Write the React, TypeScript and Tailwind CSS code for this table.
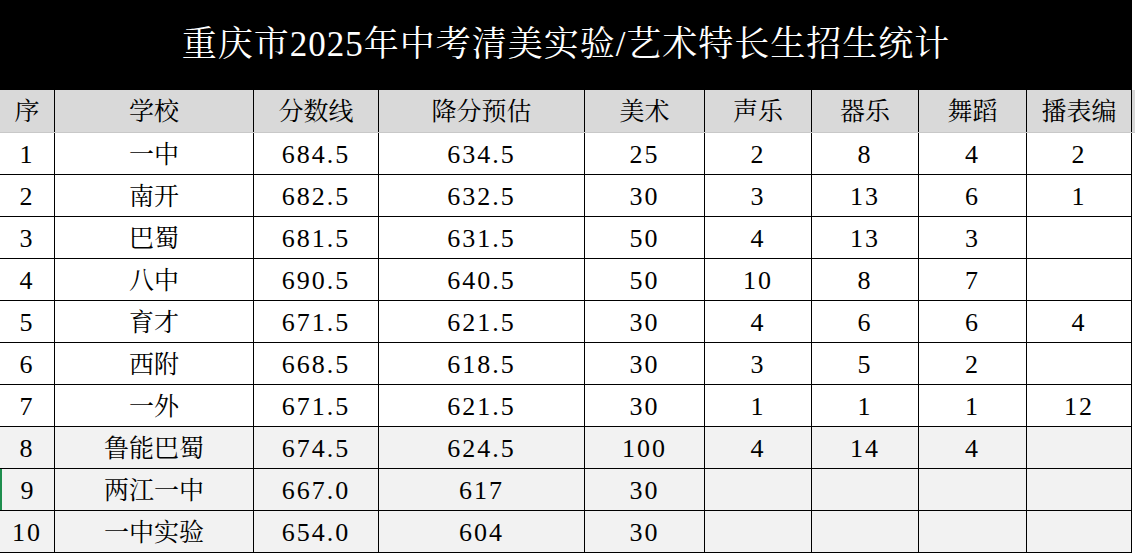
import React from "react";

const font = {
  fontFamily:
    '"Liberation Serif", "Noto Serif CJK SC", "Noto Sans CJK SC", serif',
};

const headers = ["序", "学校", "分数线", "降分预估", "美术", "声乐", "器乐", "舞蹈", "播表编"];

const rows: string[][] = [
  ["1", "一中", "684.5", "634.5", "25", "2", "8", "4", "2"],
  ["2", "南开", "682.5", "632.5", "30", "3", "13", "6", "1"],
  ["3", "巴蜀", "681.5", "631.5", "50", "4", "13", "3", ""],
  ["4", "八中", "690.5", "640.5", "50", "10", "8", "7", ""],
  ["5", "育才", "671.5", "621.5", "30", "4", "6", "6", "4"],
  ["6", "西附", "668.5", "618.5", "30", "3", "5", "2", ""],
  ["7", "一外", "671.5", "621.5", "30", "1", "1", "1", "12"],
  ["8", "鲁能巴蜀", "674.5", "624.5", "100", "4", "14", "4", ""],
  ["9", "两江一中", "667.0", "617", "30", "", "", "", ""],
  ["10", "一中实验", "654.0", "604", "30", "", "", "", ""],
];

const gridCols =
  "grid grid-cols-[54px_199px_125px_206px_120px_107px_107px_108px_106px] w-[1132px]";

export default function App() {
  return (
    <div className="w-[1135px] h-[555px] bg-white overflow-hidden text-black" style={font}>
      <div className="w-[1132px] h-[90px] bg-black flex items-center justify-center">
        <span className="text-white text-[35px] leading-none tracking-[1px] pb-[2px]">
          重庆市2025年中考清美实验/艺术特长生招生统计
        </span>
      </div>
      <div className="flex w-[1135px] h-[43px] bg-[#d9d9d9] border-b border-[#c8c8c8]">
        <div className={gridCols}>
          {headers.map((h, i) => (
            <div
              key={h}
              className={`h-[42px] flex items-center justify-center text-[25px] leading-none ${
                i > 0 ? "border-l border-black" : ""
              } ${i === headers.length - 1 ? "border-r border-black" : ""}`}
            >
              {h}
            </div>
          ))}
        </div>
      </div>
      {rows.map((r, ri) => (
        <div key={ri} className="flex w-[1135px]">
          <div
            className={`${gridCols} h-[42px] border-b border-black ${
              ri >= 7 ? "bg-[#f2f2f2]" : "bg-white"
            }`}
          >
            {r.map((c, ci) => {
              const isCjk = ci === 1;
              return (
                <div
                  key={ci}
                  className={`flex items-center justify-center leading-none pt-[2px] ${
                    isCjk ? "text-[25px]" : "text-[26px] tracking-[2px]"
                  } ${ci > 0 ? "border-l border-black" : ""} ${
                    ci === r.length - 1 ? "border-r border-black" : ""
                  } ${ci === 0 && ri === 8 ? "border-l-2 border-[#1e8e4e]" : ""}`}
                >
                  {c}
                </div>
              );
            })}
          </div>
        </div>
      ))}
    </div>
  );
}
